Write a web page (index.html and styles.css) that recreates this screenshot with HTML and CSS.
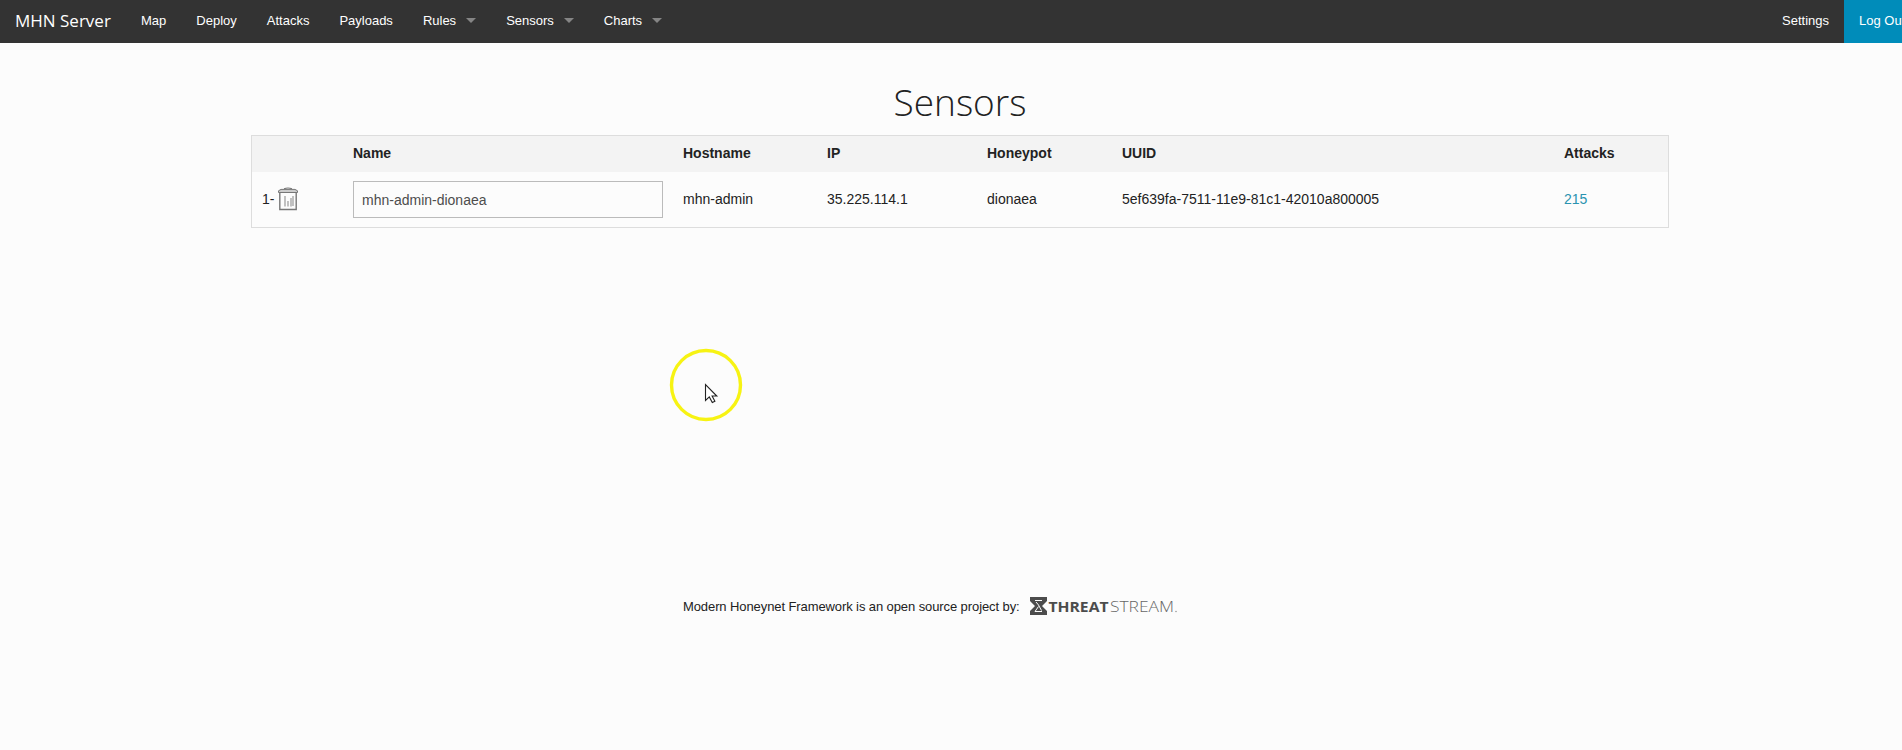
FILE: index.html
```html
<!DOCTYPE html>
<html lang="en">
<head>
<meta charset="utf-8">
<title>MHN Server</title>
<link rel="stylesheet" href="styles.css">
</head>
<body>
<nav class="top-bar">
  <a class="brand">MHN Server</a>
  <a class="item">Map</a>
  <a class="item">Deploy</a>
  <a class="item">Attacks</a>
  <a class="item">Payloads</a>
  <a class="item has-dropdown">Rules</a>
  <a class="item has-dropdown">Sensors</a>
  <a class="item has-dropdown">Charts</a>
  <a class="item settings">Settings</a>
  <a class="item logout">Log Out</a>
</nav>
<main class="content">
  <h1 class="title">Sensors</h1>
  <table class="sensors">
    <colgroup><col class="c-index"><col class="c-name"><col class="c-host"><col class="c-ip"><col class="c-pot"><col class="c-uuid"><col></colgroup>
    <thead>
      <tr><th></th><th>Name</th><th>Hostname</th><th>IP</th><th>Honeypot</th><th>UUID</th><th>Attacks</th></tr>
    </thead>
    <tbody>
      <tr>
        <td><div class="index">1-<svg class="trash" width="20" height="24" viewBox="0 0 20 24" fill="none" stroke="#777"><path d="M6 1.7q4-1.4 8 0" stroke-width="1.2"/><path d="M.5 5.5V3.8L3 2.4h14l2.5 1.4v1.7z" fill="#ccc"/><path d="M1.8 6v16.5h16.4V6" stroke-width="1.4"/><path d="M7 9v10.500M10 14v5.500M13 11v8.500M15 9v10" stroke="#999" stroke-width="1.2"/></svg></div></td>
        <td><input class="name" type="text" value="mhn-admin-dionaea"></td>
        <td>mhn-admin</td><td>35.225.114.1</td><td>dionaea</td>
        <td>5ef639fa-7511-11e9-81c1-42010a800005</td>
        <td><a class="link">215</a></td>
      </tr>
    </tbody>
  </table>
</main>
<footer class="footer">
  <span class="credit">Modern Honeynet Framework is an open source project by:</span>
  <svg class="logo" width="150" height="20" viewBox="0 0 150 20">
    <path d="M0 1h17v4l-5 5 5 5v4H0v-4l5-5-5-5z" fill="#4c4c4c"/>
    <path d="M5 4.500h7M6 6l2.500 3 3 5.500M8.500 10.500l-3.500 5h7" fill="none" stroke="#fcfcfc" stroke-width="1"/>
    <text class="threat" x="18.500" y="16" textLength="60" lengthAdjust="spacingAndGlyphs">THREAT</text>
    <text class="stream" x="80" y="16" textLength="64" lengthAdjust="spacingAndGlyphs">STREAM</text>
    <circle cx="146" cy="15.500" r=".8" fill="#999"/>
  </svg>
</footer>
<svg class="pointer" width="76" height="76" viewBox="0 0 76 76">
  <circle cx="38" cy="38" r="34.5" fill="none" stroke="#f7f313" stroke-width="3.4"/>
  <path d="M37.5 37.5v16l3.8-3.6 3 5.7 2.6-1.3-2.8-5.3h4.7z" fill="#fff" stroke="#222" stroke-width="1.1"/>
</svg>
</body>
</html>
```
FILE: styles.css
```css
* { box-sizing: border-box; }
html { overflow: hidden; }
body {
  margin: 0;
  height: 750px;
  overflow: hidden;
  background: #fcfcfc;
  color: #222;
  font-family: "Liberation Sans", Arial, sans-serif;
  font-size: 14px;
}
.top-bar {
  display: flex;
  width: 1921px;
  height: 43px;
  line-height: 41px;
  background: #333;
  color: #fff;
  font-size: 13px;
}
.brand {
  width: 126px;
  padding-left: 15px;
  font-family: "Open Sans", sans-serif;
  font-size: 17px;
  white-space: nowrap;
}
.item { padding: 0 15px; white-space: nowrap; }
.has-dropdown { display: flex; align-items: flex-start; padding-right: 15px; }
.has-dropdown::after {
  content: "";
  margin: 18px 0 0 10px;
  border: 5px solid transparent;
  border-top-color: #858585;
}
.settings { margin-left: auto; }
.logout { width: 77px; background: #008cba; }
.content { width: 1418px; margin: 0 auto 0 251px; }
.title {
  margin: 0;
  padding-top: 33px;
  height: 92px;
  line-height: 52px;
  text-align: center;
  font-family: "Open Sans", sans-serif;
  font-size: 37px;
  font-weight: 300;
}
.sensors {
  width: 1418px;
  height: 93px;
  table-layout: fixed;
  border-collapse: separate;
  border-spacing: 0;
  border: 1px solid #ddd;
}
.c-index { width: 91px; }
.c-name { width: 330px; }
.c-host { width: 144px; }
.c-ip { width: 160px; }
.c-pot { width: 135px; }
.c-uuid { width: 442px; }
th { height: 36px; padding: 0 10px 2px; background: #f3f3f3; text-align: left; font-weight: bold; }
td { padding: 0 10px 2px; height: 55px; }
.index { display: flex; align-items: center; gap: 4px; }
.name {
  display: block;
  width: 310px;
  height: 37px;
  margin-top: 2px;
  padding: 0 8px;
  border: 1px solid #bbb;
  background: #fcfcfc;
  color: #4d4d4d;
  font: inherit;
}
.link { color: #2a93b0; }
.footer {
  display: flex;
  align-items: center;
  gap: 10px;
  padding: 368px 0 0 683px;
  font-size: 13px;
}
.credit { letter-spacing: -0.095px; }
.threat { font: 700 15px "Open Sans", sans-serif; fill: #4c4c4c; }
.stream { font: 300 15px "Open Sans", sans-serif; fill: #666; }
.pointer { position: absolute; left: 668px; top: 347px; }
```
